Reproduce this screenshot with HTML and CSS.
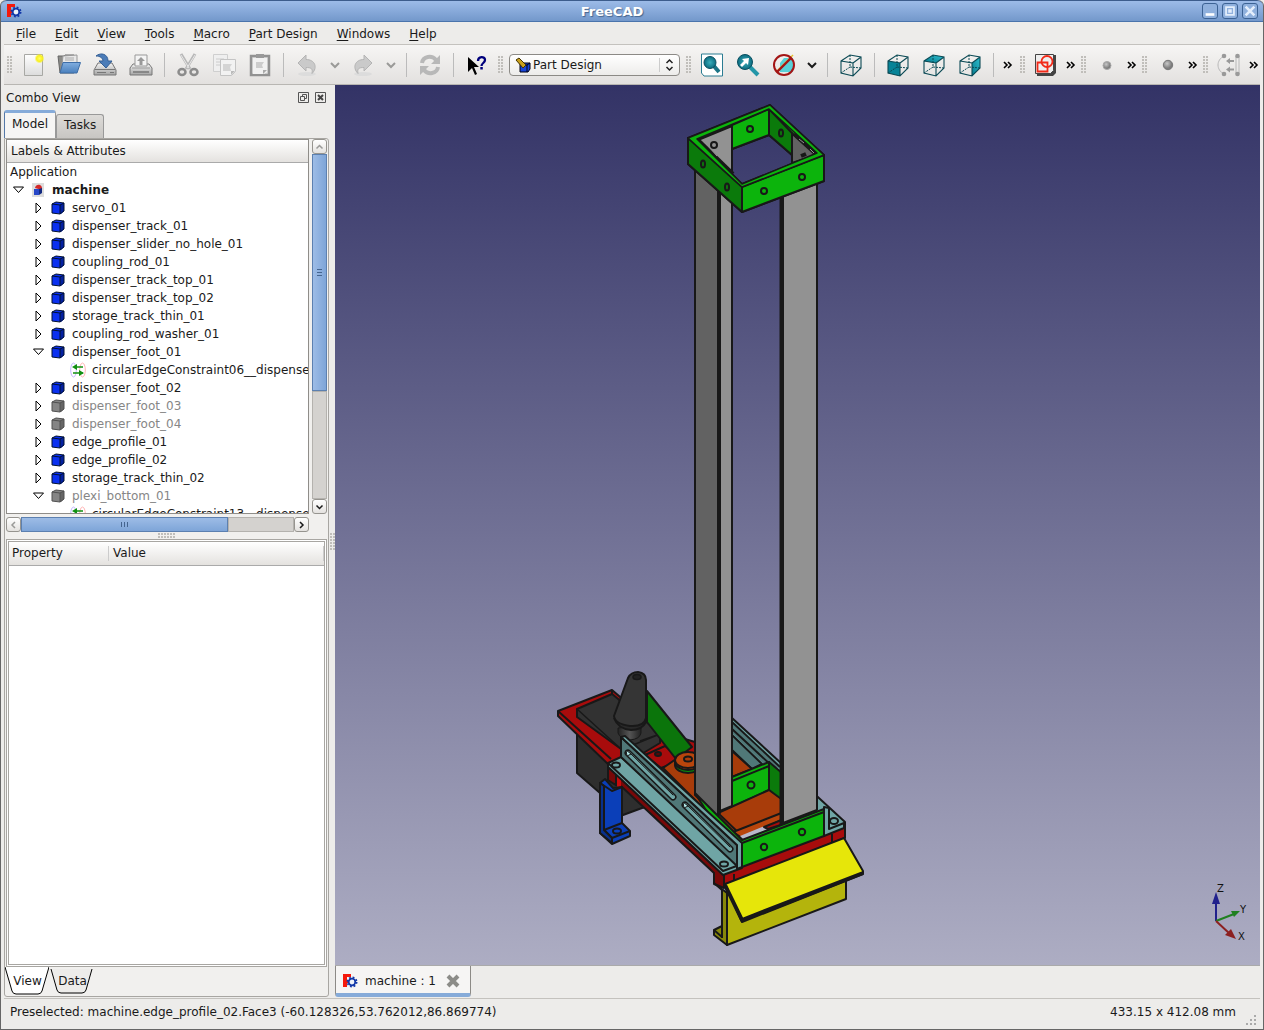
FILE: index.html
```html
<!DOCTYPE html>
<html lang="en">
<head>
<meta charset="utf-8">
<title>FreeCAD</title>
<link rel="stylesheet" href="styles.css">
</head>
<body>
<svg class="defs" aria-hidden="true">
  <defs>
    <linearGradient id="paper" x2="0" y2="1"><stop offset="0" stop-color="#fff"/><stop offset="1" stop-color="#dcdcdc"/></linearGradient>
    <linearGradient id="metal" x2="0" y2="1"><stop offset="0" stop-color="#f4f4f4"/><stop offset="1" stop-color="#a4a4a4"/></linearGradient>
    <linearGradient id="blue" x2="0" y2="1"><stop offset="0" stop-color="#81aee0"/><stop offset="1" stop-color="#4a80bd"/></linearGradient>
    <radialGradient id="lens"><stop offset="0" stop-color="#3aaebb"/><stop offset="1" stop-color="#0c6c80"/></radialGradient>
    <radialGradient id="glow"><stop offset="0" stop-color="#ffff60"/><stop offset=".6" stop-color="#f8f020"/><stop offset="1" stop-color="#f8f020" stop-opacity="0"/></radialGradient>
    <radialGradient id="ball" cx=".4" cy=".35"><stop offset="0" stop-color="#c8c8c8"/><stop offset="1" stop-color="#7c7c7c"/></radialGradient>
    <linearGradient id="teal" x1="1" x2="0" y2="1"><stop offset="0" stop-color="#2fc0d0"/><stop offset="1" stop-color="#04788c"/></linearGradient>
    <linearGradient id="neck"><stop offset="0" stop-color="#222"/><stop offset=".5" stop-color="#555"/><stop offset="1" stop-color="#222"/></linearGradient>
    <symbol id="logo" viewBox="0 0 16 16">
      <path d="M1 1h8v3H5v3h4v3H5v4H1z" fill="#f5190c"/>
      <circle cx="10" cy="9" r="3.300" fill="#edf2fa" stroke="#1238a8" stroke-width="1.800"/>
      <circle cx="10" cy="9" r="4.700" fill="none" stroke="#1238a8" stroke-width="1.600" stroke-dasharray="1.850 1.850"/>
    </symbol>
    <symbol id="box" viewBox="0 0 14 14">
      <path class="face" d="M1 3l4-2 8 1v8l-3 3-9-1z"/><path class="side" d="M9 4l4-2v8l-4 3z"/>
      <path d="M1 3l4-2 8 1v8l-4 3-8-1zM1 3l8 1v9M9 4l4-2" fill="none" class="line"/>
    </symbol>
    <symbol id="constraint" viewBox="0 0 16 16">
      <ellipse cx="3.500" cy="8" rx="2.800" ry="7" fill="none" stroke="#c4b8ff"/><ellipse cx="12.500" cy="8" rx="2.800" ry="7" fill="none" stroke="#ffb4b4"/>
      <path d="M13 5H6M13 11H3" stroke="#109010" stroke-width="1.600"/><path d="M2 5l5-3v6zM14 11L9 8v6z" fill="#109010"/>
    </symbol>
    <symbol id="open" viewBox="0 0 11 8"><path d="M0.500 1h10L5.500 6.500z" fill="#fff" stroke="#000"/></symbol>
    <symbol id="closed" viewBox="0 0 8 12"><path d="M1.500 1v10L6.500 6z" fill="#fff" stroke="#000"/></symbol>
    <symbol id="cube" viewBox="0 0 24 24"><path d="M2 8l9-6 11 2v11l-8 8-12-3zM2 8l12 2v13M14 10l8-6" fill="none" stroke="#0b4a55" stroke-width="1.100"/><path d="M11 2v12l11 1M11 14l-9 6" fill="none" stroke="#0b4a55" stroke-dasharray="2 1"/></symbol>
    <symbol id="chev" viewBox="0 0 12 8"><path d="M2 2l4 4 4-4" fill="none" stroke="currentColor" stroke-width="2"/></symbol>
    <symbol id="turn" viewBox="0 0 24 24"><ellipse cx="12" cy="21" rx="9" ry="2" fill="#dcdcdc"/><path d="M3 10l8-8v4.500c9 0 12 8 6 14 1-5-1-6-6-6V18z" fill="#cacaca" stroke="#b4b4b4"/></symbol>
    <symbol id="more" viewBox="0 0 10 8"><path d="M1 1l3 3-3 3M5 1l3 3-3 3" fill="none" stroke="#000" stroke-width="1.600"/></symbol>
  </defs>
</svg>
<div class="window">
  <header class="titlebar">
    <svg class="i16"><use href="#logo"/></svg>
    <h1>FreeCAD</h1>
    <div class="winbtns">
      <button aria-label="Minimize"><svg viewBox="0 0 16 16"><path d="M3 12h10" stroke="#fff" stroke-width="3"/></svg></button>
      <button aria-label="Maximize"><svg viewBox="0 0 16 16"><path d="M3.500 3.500h9v9h-9z" fill="none" stroke="#e4eefc" stroke-width="2"/><path d="M6 6h4v4H6z" fill="#e4eefc"/></svg></button>
      <button aria-label="Close"><svg viewBox="0 0 16 16"><path d="M3 3l10 10M13 3L3 13" stroke="#e4eefc" stroke-width="3"/></svg></button>
    </div>
  </header>
  <nav class="menubar">
    <button><u>F</u>ile</button><button><u>E</u>dit</button><button><u>V</u>iew</button><button><u>T</u>ools</button><button><u>M</u>acro</button><button><u>P</u>art Design</button><button><u>W</u>indows</button><button><u>H</u>elp</button>
  </nav>
  <div class="toolbar">
    <i class="grip"></i>
    <button class="tool" aria-label="New"><svg viewBox="0 0 24 24"><path d="M3.500 1.500h18v21h-18z" fill="url(#paper)" stroke="#a8a8a4"/><circle cx="18.500" cy="5.500" r="5" fill="url(#glow)"/></svg></button>
    <button class="tool" aria-label="Open"><svg viewBox="0 0 24 24"><path d="M1 3h6l1-1h9v18H3z" fill="#8c8c88" stroke="#666"/><path d="M6 3l14-1v10H5z" fill="#e8e8e8" stroke="#999"/><path d="M8 5h9M8 7h9" stroke="#aaa"/><path d="M6 9.500h17.500L20 20H3z" fill="url(#blue)" stroke="#3e6ea8"/></svg></button>
    <button class="tool" aria-label="Save"><svg viewBox="0 0 24 24"><path d="M5 10h14l4 7v5H1v-5z" fill="url(#metal)" stroke="#777"/><path d="M2 16.500h20M4 19.500h9M17 19.500h4" stroke="#777"/><path d="M3 3c5-4 12-2 12 5h4l-6 7-7-7h4c0-3-3-5-7-5z" fill="#4b7cb8" stroke="#345f96"/></svg></button>
    <button class="tool" aria-label="Print"><svg viewBox="0 0 24 24"><path d="M4 11h16l3 4v7H1v-7z" fill="url(#metal)" stroke="#777"/><path d="M6 2h12v11H6z" fill="#f4f4f4" stroke="#999"/><path d="M12 4l4 4h-2.500v4h-3V8H8z" fill="#999"/><path d="M3 15h18" stroke="#999"/><path d="M4 19h16" stroke="#777" stroke-width="1.500"/></svg></button>
    <i class="sep"></i>
    <button class="tool" aria-label="Cut"><svg viewBox="0 0 24 24"><path d="M5 1l9 15M19 1L10 16" stroke="#b8b8b8" stroke-width="3"/><path d="M5 2l8 13M19 2l-8 13" stroke="#e8e8e8"/><ellipse cx="6" cy="19" rx="3.500" ry="3" fill="none" stroke="#8c8c8c" stroke-width="2.500"/><ellipse cx="18" cy="19" rx="3.500" ry="3" fill="none" stroke="#8c8c8c" stroke-width="2.500"/></svg></button>
    <button class="tool" aria-label="Copy"><svg viewBox="0 0 24 24"><path d="M1.500 1.500h14v17h-14z" fill="#efefef" stroke="#cfcfcf"/><path d="M4 6h8M4 9h8M4 12h5" stroke="#ccc"/><path d="M8.500 6.500h15v12l-4 4h-11z" fill="#f2f2f2" stroke="#c4c4c4"/><path d="M11 11h9l-2 3 1 4h-8z" fill="#d4d4d4"/><path d="M19 22v-4h4z" fill="#bbb"/></svg></button>
    <button class="tool" aria-label="Paste"><svg viewBox="0 0 24 24"><path d="M3 3h18v19H3z" fill="#ddd" stroke="#929292" stroke-width="2.500"/><path d="M5 5h14v14l-3 2H5z" fill="#f1f1f1"/><path d="M8 1h8v4H8z" fill="#999"/><path d="M8 9h8l-2 3 1 3H8z" fill="#ccc"/><path d="M15 21v-4h4z" fill="#aaa"/></svg></button>
    <i class="sep"></i>
    <button class="tool" aria-label="Undo"><svg><use href="#turn"/></svg></button>
    <button class="drop off" aria-label="Undo list"><svg><use href="#chev"/></svg></button>
    <button class="tool" aria-label="Redo"><svg class="flip"><use href="#turn"/></svg></button>
    <button class="drop off" aria-label="Redo list"><svg><use href="#chev"/></svg></button>
    <i class="sep"></i>
    <button class="tool" aria-label="Refresh"><svg viewBox="0 0 24 24"><path d="M4 10c1-7 10-8 14-3M20 14c-1 7-10 8-14 3" fill="none" stroke="#b8b8b8" stroke-width="4"/><path d="M22 2v9h-9zM2 22v-9h9z" fill="#b8b8b8"/></svg></button>
    <i class="sep"></i>
    <button class="tool" aria-label="What's this?"><svg viewBox="0 0 24 24"><path d="M3 4v15l4-4 3 7 2-1-3-7h5z" fill="#000"/><path d="M13 8c0-5 7-5 7-1 0 3-3.500 3-3.500 6" fill="none" stroke="#00007c" stroke-width="2.300"/><path d="M15.300 14h2.500v2.500h-2.500z" fill="#00007c"/></svg></button>
    <i class="grip"></i>
    <div class="combo"><svg class="i16" viewBox="0 0 16 16"><path d="M5 6h10v6l-2 3H5z" fill="#1744d8" stroke="#001"/><path d="M12 15V8l3-2M5 8h7" fill="none" stroke="#001"/><path d="M1 3l3-2 7 7-3 3z" fill="#c9a01c" stroke="#443300"/></svg>
      <select aria-label="Workbench"><option>Part Design</option></select>
      <svg class="updown" viewBox="0 0 10 14"><path d="M2 5l3-3 3 3M2 9l3 3 3-3" fill="none" stroke="#222" stroke-width="1.500"/></svg></div>
    <i class="grip"></i>
    <button class="tool" aria-label="Fit all"><svg viewBox="0 0 24 24"><path d="M1.500 1h21v22H4l-2.500-3z" fill="#fff" stroke="#2b7c92"/><path d="M13 12l6 7" stroke="#1b7486" stroke-width="4"/><circle cx="10" cy="9.500" r="6" fill="url(#lens)" stroke="#0b4f60"/></svg></button>
    <button class="tool" aria-label="Fit selection"><svg viewBox="0 0 24 24"><path d="M14 14l8 8" stroke="#2396a8" stroke-width="4"/><circle cx="9" cy="9" r="7.500" fill="url(#lens)" stroke="#0b4f60"/><path d="M4 12l4-4-2-2 7-1-1 7-2-2-4 4z" fill="#fff"/></svg></button>
    <button class="tool" aria-label="Draw style"><svg viewBox="0 0 24 24"><path d="M8 10l4-5h9v14H8z" fill="#59d0d8"/><path d="M4 19L21 2" stroke="#e3c12c" stroke-width="1.500"/><circle cx="12" cy="12" r="10" fill="none" stroke="#a31515" stroke-width="2"/><path d="M5 19L19 5" stroke="#a31515" stroke-width="2.400"/></svg></button>
    <button class="drop" aria-label="Draw style list"><svg><use href="#chev"/></svg></button>
    <i class="sep"></i>
    <button class="tool" aria-label="Axonometric"><svg><use href="#cube"/></svg></button>
    <i class="sep"></i>
    <button class="tool" aria-label="Front"><svg viewBox="0 0 24 24"><path d="M2 8l12 2v13l-12-3z" fill="#078397"/><use href="#cube"/></svg></button>
    <button class="tool" aria-label="Top"><svg viewBox="0 0 24 24"><path d="M2 8l9-6 11 2-8 6z" fill="url(#teal)"/><use href="#cube"/></svg></button>
    <button class="tool" aria-label="Right"><svg viewBox="0 0 24 24"><path d="M14 10l8-6v11l-8 8z" fill="url(#teal)"/><use href="#cube"/></svg></button>
    <i class="sep"></i>
    <button class="more wide" aria-label="More view tools"><svg><use href="#more"/></svg></button>
    <i class="grip"></i>
    <button class="tool" aria-label="Sketch"><svg viewBox="0 0 24 24"><path d="M3 2h19v18l-3 3H3z" fill="#444"/><path d="M1.500 1.500h18v16l-3 3h-15z" fill="#eee" stroke="#444"/><path d="M3.500 9.500h10v9h-10z" fill="none" stroke="#f22a18" stroke-width="1.800"/><circle cx="13" cy="8.500" r="5.500" fill="none" stroke="#f22a18" stroke-width="1.800"/></svg></button>
    <button class="more" aria-label="More sketch tools"><svg><use href="#more"/></svg></button>
    <i class="grip"></i>
    <button class="tool" aria-label="Point"><svg viewBox="0 0 24 24"><circle cx="12" cy="12.500" r="4" fill="url(#ball)" stroke="#aaa"/></svg></button>
    <button class="more" aria-label="More geometry"><svg><use href="#more"/></svg></button>
    <i class="grip"></i>
    <button class="tool" aria-label="Coincident"><svg viewBox="0 0 24 24"><circle cx="12" cy="12" r="4.700" fill="url(#ball)" stroke="#777"/></svg></button>
    <button class="more" aria-label="More constraints"><svg><use href="#more"/></svg></button>
    <i class="grip"></i>
    <button class="tool" aria-label="Circular edge"><svg viewBox="0 0 24 24"><path d="M7 3c-8 4-8 14 0 18M19 3v18M22 3v18" fill="none" stroke="#b8b8b8"/><g fill="#999"><circle cx="7" cy="3" r="2.300"/><circle cx="7" cy="21" r="2.300"/><circle cx="20.500" cy="3" r="2.300"/><circle cx="20.500" cy="21" r="2.300"/><path d="M9 8l4-3v2h4v2h-4v2zM9 16.500l4-3v2h4v2h-4v2z"/></g></svg></button>
    <button class="more" aria-label="More assembly tools"><svg><use href="#more"/></svg></button>
  </div>
  <main class="work">
    <aside class="dock">
      <div class="docktitle"><h2>Combo View</h2>
        <button aria-label="Float"><svg viewBox="0 0 11 11"><path d="M.5.500h10v10H.500z M2.500 4.500h4v4h-4z M4.500 4V2.500h4v4H7" fill="none" stroke="#555"/></svg></button>
        <button aria-label="Close panel"><svg viewBox="0 0 11 11"><path d="M.5.500h10v10H.500z" fill="none" stroke="#555"/><path d="M3 3l5 5M8 3L3 8" stroke="#444" stroke-width="2"/></svg></button></div>
      <div class="tabs"><button class="active">Model</button><button>Tasks</button></div>
      <div class="pane">
        <div class="treegrid">
          <div class="tree">
            <div class="treehead">Labels &amp; Attributes</div>
            <ul>
              <li class="app">Application</li>
              <li class="l0"><svg class="tw"><use href="#open"/></svg><svg class="i14" viewBox="0 0 14 14"><path d="M1 0h12v14H1z" fill="#ddd"/><path d="M4 5c1-5 8-4 7 2z" fill="#d42828"/><path d="M3 6h5v6H3z" fill="#2848c8"/><path d="M8 6l3-1v5l-3 2z" fill="#122a80"/></svg><b>machine</b></li>
              <li><svg class="tw"><use href="#closed"/></svg><svg class="i14"><use href="#box"/></svg>servo_01</li>
              <li><svg class="tw"><use href="#closed"/></svg><svg class="i14"><use href="#box"/></svg>dispenser_track_01</li>
              <li><svg class="tw"><use href="#closed"/></svg><svg class="i14"><use href="#box"/></svg>dispenser_slider_no_hole_01</li>
              <li><svg class="tw"><use href="#closed"/></svg><svg class="i14"><use href="#box"/></svg>coupling_rod_01</li>
              <li><svg class="tw"><use href="#closed"/></svg><svg class="i14"><use href="#box"/></svg>dispenser_track_top_01</li>
              <li><svg class="tw"><use href="#closed"/></svg><svg class="i14"><use href="#box"/></svg>dispenser_track_top_02</li>
              <li><svg class="tw"><use href="#closed"/></svg><svg class="i14"><use href="#box"/></svg>storage_track_thin_01</li>
              <li><svg class="tw"><use href="#closed"/></svg><svg class="i14"><use href="#box"/></svg>coupling_rod_washer_01</li>
              <li><svg class="tw"><use href="#open"/></svg><svg class="i14"><use href="#box"/></svg>dispenser_foot_01</li>
              <li class="l2"><svg class="i16"><use href="#constraint"/></svg>circularEdgeConstraint06__dispenser</li>
              <li><svg class="tw"><use href="#closed"/></svg><svg class="i14"><use href="#box"/></svg>dispenser_foot_02</li>
              <li class="hid"><svg class="tw"><use href="#closed"/></svg><svg class="i14"><use href="#box"/></svg>dispenser_foot_03</li>
              <li class="hid"><svg class="tw"><use href="#closed"/></svg><svg class="i14"><use href="#box"/></svg>dispenser_foot_04</li>
              <li><svg class="tw"><use href="#closed"/></svg><svg class="i14"><use href="#box"/></svg>edge_profile_01</li>
              <li><svg class="tw"><use href="#closed"/></svg><svg class="i14"><use href="#box"/></svg>edge_profile_02</li>
              <li><svg class="tw"><use href="#closed"/></svg><svg class="i14"><use href="#box"/></svg>storage_track_thin_02</li>
              <li class="hid"><svg class="tw"><use href="#open"/></svg><svg class="i14"><use href="#box"/></svg>plexi_bottom_01</li>
              <li class="l2"><svg class="i16"><use href="#constraint"/></svg>circularEdgeConstraint13__dispenser</li>
            </ul>
          </div>
          <div class="vbar"><button class="off" aria-label="Scroll up"><svg class="up"><use href="#chev"/></svg></button><div class="vthumb"></div><div class="track"></div><button aria-label="Scroll down"><svg><use href="#chev"/></svg></button></div>
          <div class="hbar"><button class="off" aria-label="Scroll left"><svg class="left"><use href="#chev"/></svg></button><div class="hthumb"></div><div class="track"></div><button aria-label="Scroll right"><svg class="right"><use href="#chev"/></svg></button></div>
        </div>
        <div class="split"><i class="dots"></i></div>
        <div class="props">
          <table><thead><tr><th>Property</th><th>Value</th></tr></thead></table>
        </div>
        <div class="lowtabs">
          <button class="cur"><svg viewBox="0 0 44 28"><path d="M0 0l7 24q1 3 4 3h22q3 0 4-3l7-24" fill="#fff" stroke="#000"/></svg><span>View</span></button>
          <button><svg viewBox="0 0 44 28"><path d="M1 2l6 21q1 3 4 3h21q3 0 4-3l6-21" fill="#edecea" stroke="#000"/></svg><span>Data</span></button>
        </div>
      </div>
    </aside>
    <div class="vsplit"><i class="dots tall"></i></div>
    <section class="docs">
      <div class="viewport">
        <svg viewBox="335 85 925 880" role="img" aria-label="machine 3D model" stroke="#181818" stroke-width="2" stroke-linejoin="round">
          <!-- servo mounting plate -->
          <path d="M577 733V773L600 793L623 815L642 808L700 795L650 740z" fill="#2e2e2e"/>
          <path d="M558 711L612 690L661 732L695 742V785L655 778L616 765L610 766L558 716z" fill="#a80c0c"/>
          <path d="M558 711L611 759" fill="none"/><path d="M612 690V694" fill="none"/>
          <path d="M577 709L612 694L660 733V743L640 755L621 749L577 717z" fill="#323232"/>
          <path d="M577 709L621 749M633 745L660 734M640 741L660 734" fill="none" stroke-width="1.500"/>
          <path d="M645 755l20-9 18 14-22 8z" fill="#a80c0c"/><ellipse cx="658" cy="754" rx="3" ry="2" fill="#5a0808"/>
          <!-- servo horn and coupling rod -->
          <path d="M647 691L692 747L676 759L647 722z" fill="#0b750b"/>
          <path d="M618 728V733Q620 739 630 740Q640 739 641 733V726z" fill="url(#neck)" stroke-width="1"/>
          <path d="M614 718Q618 729 631 730Q642 730 646 722" fill="#292929"/>
          <path d="M628 678Q631 672 638 672Q646 673 646 680V718Q644 727 630 726Q615 724 614 716z" fill="#353535"/>
          <ellipse cx="637" cy="677" rx="4" ry="2.500" fill="#222" stroke-width="1.500"/>
          <!-- slider -->
          <path d="M663 768L676 759L700 757V795L745 838L735 840z" fill="#a83c0a"/>
          <ellipse cx="688" cy="765" rx="13" ry="8" fill="#0b8c0b"/><ellipse cx="688" cy="762" rx="13" ry="8" fill="#b8450c"/><ellipse cx="688" cy="760" rx="13" ry="8" fill="#b8450c"/><ellipse cx="688" cy="759" rx="4" ry="2.500" fill="#a83c0a"/>
          <!-- rear rail -->
          <path d="M732 718L845 822V827L824 835V818L732 750z" fill="#6fa5a5"/>
          <path d="M732 723L780 768L766 766L732 733z" fill="#507878" stroke="none"/>
          <path d="M732 735L762 764L752 769L732 750z" fill="#507878"/>
          <path d="M732 722L780 767M732 729L772 766" fill="none"/>
          <path d="M732 751L752 769L732 777z" fill="#a83c0a"/>
          <path d="M732 777L769 762V790L732 807z" fill="#0cb40c"/><path d="M732 781L769 766" fill="none"/>
          <path d="M769 762L782 773V802L769 790z" fill="#0b7a0b"/><circle cx="751" cy="785" r="3.500" fill="none"/>
          <path d="M718 813L769 790L784 801V822L744 838z" fill="#a83c0a"/>
          <path d="M733 832L784 812V819L742 838z" fill="#b8450c"/>
          <path d="M740 836L762 827L784 822L744 840z" fill="#b9b8cb" stroke="none"/><path d="M764 827L784 819V824L768 829z" fill="#a80c0c"/>
          <!-- columns -->
          <path d="M695 166L718 187V817L695 795z" fill="#626262"/>
          <path d="M720 187L732 190V806L720 811z" fill="#929292"/><path d="M719 188V814" stroke-width="3.500"/>
          <path d="M783 190L817 178V810L783 823z" fill="#929292"/><path d="M781.500 192V825" stroke-width="4"/>
          <!-- collar -->
          <path d="M688 138L770 105L824 155V181L742 212L688 164z M732 149V174L742 184L792 164V155L769 135z" fill="#0cb40c" fill-rule="evenodd"/>
          <path d="M698 140L732 126V175z" fill="#929292"/><path d="M698 140L733 174" stroke-width="4"/><path d="M709 147L717 156" stroke="#929292" stroke-width="1"/>
          <path d="M732 125L769 109V135L732 149z" fill="#0cb40c"/>
          <path d="M769 109L792 133V155L769 135z" fill="#0b7a0b"/>
          <path d="M792 133L817 155L792 163z" fill="#626262"/><path d="M794 134L816 154" stroke-width="4"/><path d="M799 139l5 4M810 149l4 4" stroke="#929292" stroke-width="1"/>
          <path d="M688 138L742 187V212L688 164z" fill="#0b7a0b"/>
          <path d="M742 187L824 155V181L742 212z" fill="#0cb40c"/>
          <path d="M688 138L742 187L824 155L770 105zM697 139L769 109L817 153L742 184z" fill="#0cb40c" fill-rule="evenodd" stroke-width="1.500"/>
          <g fill="none"><ellipse cx="703" cy="164" rx="2" ry="3.500"/><ellipse cx="727" cy="187" rx="2" ry="3.500"/><ellipse cx="781" cy="133" rx="2" ry="3.500"/><circle cx="750" cy="129" r="3"/><circle cx="714" cy="145" r="3"/><circle cx="764" cy="191" r="3"/><circle cx="802" cy="177" r="3"/><path d="M801 156l5-2" stroke-width="4"/></g>
          <!-- lower frame, brackets, rails -->
          <path d="M608 766V780L614 784L622 787L714 873V884L724 888V874z" fill="#780808"/>
          <path d="M724 873L845 825V838L724 886z" fill="#a80c0c"/>
          <path d="M617 772L621 776V788H617z" fill="#c80c0c" stroke="none"/><path d="M616 773V786M734 874V883M832 834V843" fill="none"/>
          <path d="M695 793L742 840L824 809V836L742 867z" fill="#0cb40c"/><path d="M742 843L824 812" fill="none"/>
          <circle cx="764" cy="847" r="3.200" fill="none"/><circle cx="802" cy="832" r="3.200" fill="none"/>
          <path d="M824 807L829 808V829L844 823V828L824 836z" fill="#6fa5a5"/><ellipse cx="834" cy="821" rx="4" ry="3" fill="#6fa5a5"/>
          <path d="M608 763L621 757L742 866V868L723 875L608 767z" fill="#6fa5a5"/><path d="M608 763L723 871L742 864" fill="none"/>
          <path d="M621 737L737 845V866L621 757z" fill="#507878"/><path d="M621 737L625 736L742 843V867L737 869V845z" fill="#6fa5a5"/>
          <g fill="none" stroke-linecap="round"><path d="M628 753L673 797M685 805L730 849" stroke-width="7"/><path d="M628 753L673 797M685 805L730 849" stroke="#6fa5a5" stroke-width="4"/><path d="M630 753L673 795M687 805L730 847" stroke-width="1"/></g>
          <path d="M626 750l5 4-4 2zM683 802l5 4-4 2z" fill="#b8f2f2" stroke-width="1"/>
          <ellipse cx="616" cy="765" rx="4" ry="2.500" fill="#6fa5a5"/><ellipse cx="724" cy="864" rx="4" ry="2.500" fill="#6fa5a5"/>
          <!-- feet -->
          <path d="M600 783L605 779L613 788L622 787V823L630 831V836L612 844L600 833z" fill="#0b3fb8"/><path d="M600 783L612 791L622 787M604 786V830L612 838L630 831M604 830L622 823" fill="none"/><path d="M600 783L604 786V830L612 838V843L600 833z" fill="#08308c"/><ellipse cx="617" cy="831" rx="4" ry="2.500" fill="none"/>
          <path d="M714 883L727 893V945L714 935V930L722 926V890z" fill="#88880a"/><path d="M714 930L722 937M722 890V938" fill="none"/>
          <path d="M727 890L846 868V899L727 945z" fill="#b4b40c"/>
          <path d="M725 884L844 838L863 871V874L742 922z" fill="#e6e60a"/><path d="M725 885L742 920L863 873" fill="none" stroke-width="4"/>
          <!-- axis cross -->
          <g stroke="none"><path d="M1216 921V900" stroke="#20208c" stroke-width="2"/><path d="M1216 892l-4 12h8z" fill="#20208c"/><path d="M1216 921l18-7" stroke="#208020" stroke-width="2"/><path d="M1240 911l-9 0 3 6z" fill="#208020"/><path d="M1216 921l14 13" stroke="#8c2020" stroke-width="2"/><path d="M1236 939l-11-4 6-6z" fill="#8c2020"/>
          <g class="axis"><text x="1217" y="892">Z</text><text x="1240" y="913">Y</text><text x="1238" y="940">X</text></g></g>
        </svg>
      </div>
      <div class="doctabs"><div class="doctab"><svg class="i16"><use href="#logo"/></svg><span>machine : 1</span><button aria-label="Close document"><svg viewBox="0 0 14 14"><path d="M2 2l10 10M12 2L2 12" stroke="#8c8c88" stroke-width="4"/></svg></button></div></div>
    </section>
  </main>
  <footer class="status"><span>Preselected: machine.edge_profile_02.Face3 (-60.128326,53.762012,86.869774)</span><span>433.15 x 412.08 mm</span><svg class="size" viewBox="0 0 12 12"><path d="M0 11h12M4 7h8M8 3h4" stroke="#aaa" stroke-width="2" stroke-dasharray="2 2"/></svg></footer>
</div>
</body>
</html>
```
FILE: styles.css
```css
* { box-sizing: border-box; }
body { margin: 0; font: 12px/18px "DejaVu Sans", sans-serif; color: #1a1a1a; background: #edecea; }
button { font: inherit; color: inherit; background: none; border: 0; padding: 0; margin: 0; }
h1, h2 { margin: 0; font-size: 12px; }
.defs { position: absolute; width: 0; height: 0; }
.i16 { width: 16px; height: 16px; flex: none; }
.i14 { width: 14px; height: 14px; flex: none; }
.window { display: flex; flex-direction: column; height: 100vh; padding: 0 3px 2px; background: #edecea; border-left: 1px solid #666; border-right: 1px solid #666; border-bottom: 1px solid #666; border-radius: 6px 6px 0 0; }

.titlebar { display: flex; align-items: center; height: 22px; flex: none; margin: 0 -3px; padding: 0 5px; border-top: 1px solid #3c5c8c; border-bottom: 1px solid #4a74ac; border-radius: 6px 6px 0 0; background: linear-gradient(#9cbbe8, #7398cb); }
.titlebar h1 { flex: 1; text-align: center; color: #fff; font-size: 13px; text-shadow: 1px 1px 1px #45658f; padding-top: 1px; }
.winbtns { display: flex; gap: 4px; }
.winbtns button { width: 16px; height: 16px; border: 1px solid #3c6294; border-radius: 3px; background: #8fb0dd; }
.winbtns svg { display: block; width: 14px; height: 14px; }

.menubar { display: flex; gap: 19px; align-items: center; height: 23px; flex: none; padding: 2px 0 0 12px; border-bottom: 1px solid #c4c2be; }
.menubar u { text-underline-offset: 2px; }

.toolbar { display: flex; align-items: center; height: 40px; flex: none; overflow: hidden; background: linear-gradient(#f6f5f4, #e3e1df); border-bottom: 1px solid #b8b6b2; }
.toolbar > * { flex: none; }
.tool { width: 36px; height: 36px; display: grid; place-items: center; }
.tool svg { width: 24px; height: 24px; }
.flip { transform: scaleX(-1); }
.drop { width: 20px; height: 36px; }
.drop svg { width: 12px; height: 8px; }
.off { color: #9a9a98; }
.more { width: 14px; height: 36px; }
.more.wide { width: 18px; }
.more svg { width: 10px; height: 8px; }
.sep { width: 11px; height: 24px; background: linear-gradient(#bbb, #bbb) center / 1px 100% no-repeat; }
.grip { width: 11px; height: 18px; background: radial-gradient(circle at 1px 1px, #c0beba 1px, transparent 1px) 3px 0 / 3px 3px; background-clip: content-box; padding: 0 3px 0 2px; }
.combo { display: flex; align-items: center; width: 171px; height: 22px; margin: 0 3px; padding-left: 5px; border: 1px solid #8c8a86; border-radius: 4px; background: linear-gradient(#fff, #edecea); }
.combo select { flex: 1; height: 20px; font: inherit; color: inherit; appearance: none; border: 0; padding: 0 0 0 2px; background: none; }
.updown { width: 20px; height: 14px; border-left: 1px solid #ccc; flex: none; }

.work { display: flex; flex: 1; min-height: 0; }
.dock { display: flex; flex-direction: column; width: 325px; flex: none; }
.docktitle { display: flex; align-items: center; gap: 6px; height: 25px; flex: none; padding: 0 3px 0 2px; }
.docktitle h2 { flex: 1; font-weight: normal; }
.docktitle svg { display: block; width: 11px; height: 11px; }
.tabs { display: flex; align-items: flex-end; height: 28px; flex: none; }
.tabs button { height: 24px; padding: 0 7px 3px; border: 1px solid #999; border-bottom: 0; border-radius: 3px 3px 0 0; background: linear-gradient(#dddbd8, #c8c6c3); }
.tabs .active { height: 28px; border-top: 3px solid #86abd9; border-left-color: #5478a8; background: #f6f5f4; }
.pane { display: flex; flex-direction: column; flex: 1; min-height: 0; border: 1px solid #a8a6a2; border-radius: 0 3px 3px 3px; background: #f1f0ee; margin-bottom: 1px; }
.treegrid { display: grid; grid-template: 375px 15px / minmax(0, 1fr) 15px; gap: 3px; padding: 0 1px; }
.tree { overflow: hidden; background: #fff; border: 1px solid #8f8d89; }
.treehead { height: 23px; line-height: 22px; padding-left: 4px; background: linear-gradient(#fff, #e4e2df); border-bottom: 1px solid #aaa; }
.tree ul { list-style: none; margin: 0; padding: 0; --face: #0a30f0; --side: #0420a0; --line: #001030; }
.tree li { display: flex; align-items: center; gap: 7px; height: 18px; padding-left: 26px; white-space: nowrap; }
.tree .app { padding-left: 3px; }
.tree .l0 { padding-left: 6px; }
.tree .l2 { gap: 6px; padding-left: 63px; }
.tree .hid { color: #868686; --face: #858585; --side: #666; --line: #505050; }
.tw { width: 11px; height: 12px; flex: none; }
.face { fill: var(--face); }
.side { fill: var(--side); }
.line { stroke: var(--line); }
.vbar, .hbar { display: flex; }
.vbar { flex-direction: column; }
.vbar button, .hbar button { display: grid; place-items: center; width: 15px; height: 15px; flex: none; border: 1px solid #96948f; border-radius: 3px; background: linear-gradient(#fff, #e4e2df); }
.vbar svg, .hbar svg { width: 9px; height: 6px; }
.up { transform: rotate(180deg); }
.left { transform: rotate(90deg); }
.right { transform: rotate(-90deg); }
.vthumb { height: 237px; border: 1px solid #5c80b0; background: repeating-linear-gradient(#45658f 0 1px, transparent 1px 3px) center / 5px 7px no-repeat, linear-gradient(90deg, #9dbce6, #7ea5d8); }
.hthumb { width: 207px; border: 1px solid #5c80b0; background: repeating-linear-gradient(90deg, #45658f 0 1px, transparent 1px 3px) center / 7px 5px no-repeat, linear-gradient(#9dbce6, #7ea5d8); }
.track { flex: 1; background: #d4d2cf; border: 1px solid #b4b2ae; }
.split { height: 7px; display: grid; place-items: center; flex: none; }
.dots { width: 18px; height: 5px; background: radial-gradient(circle at 1px 1px, #c0beba 1px, transparent 1px) 0 0 / 3px 3px; }
.dots.tall { width: 5px; height: 18px; }
.props { flex: 1; margin: 0 1px; border: 3px double #a8a6a2; background: #fff; }
.props table { width: 100%; border-collapse: collapse; table-layout: fixed; }
.props th { height: 23px; padding: 0 4px; font-weight: normal; text-align: left; border-bottom: 1px solid #aaa; background: linear-gradient(#ccc, #ccc) right / 1px 15px no-repeat, linear-gradient(#fff, #e4e2df); }
.props th:first-child { width: 100px; padding-left: 3px; }
.lowtabs { display: flex; height: 29px; flex: none; }
.lowtabs button { display: grid; width: 45px; height: 28px; }
.lowtabs svg, .lowtabs span { grid-area: 1 / 1; }
.lowtabs svg { width: 44px; height: 28px; }
.lowtabs span { align-self: center; z-index: 1; }
.vsplit { width: 6px; display: grid; place-items: center; }
.docs { flex: 1; display: flex; flex-direction: column; min-width: 0; }
.viewport { flex: 1; min-height: 0; background: linear-gradient(#333366, #adadc3); }
.viewport svg { display: block; width: 100%; height: 100%; }
.axis { font-size: 10px; fill: #111; }
.doctabs { height: 33px; flex: none; border-top: 1px solid #aaa; }
.doctab { display: flex; align-items: center; width: 136px; height: 31px; padding: 3px 0 0 6px; border: 1px solid #8c8a86; border-top: 0; border-bottom: 4px solid #86abd9; border-radius: 0 0 3px 3px; background: #f6f5f4; }
.doctab span { flex: 1; padding-left: 7px; }
.doctab button { width: 14px; height: 14px; margin-right: 10px; }
.doctab button svg { display: block; width: 14px; height: 14px; }
.status { display: flex; align-items: center; height: 29px; flex: none; padding: 0 2px 2px 6px; border-top: 1px solid #c4c2be; }
.status span:first-child { flex: 1; }
.status .size { width: 12px; height: 12px; margin-left: 10px; align-self: flex-end; }
```
